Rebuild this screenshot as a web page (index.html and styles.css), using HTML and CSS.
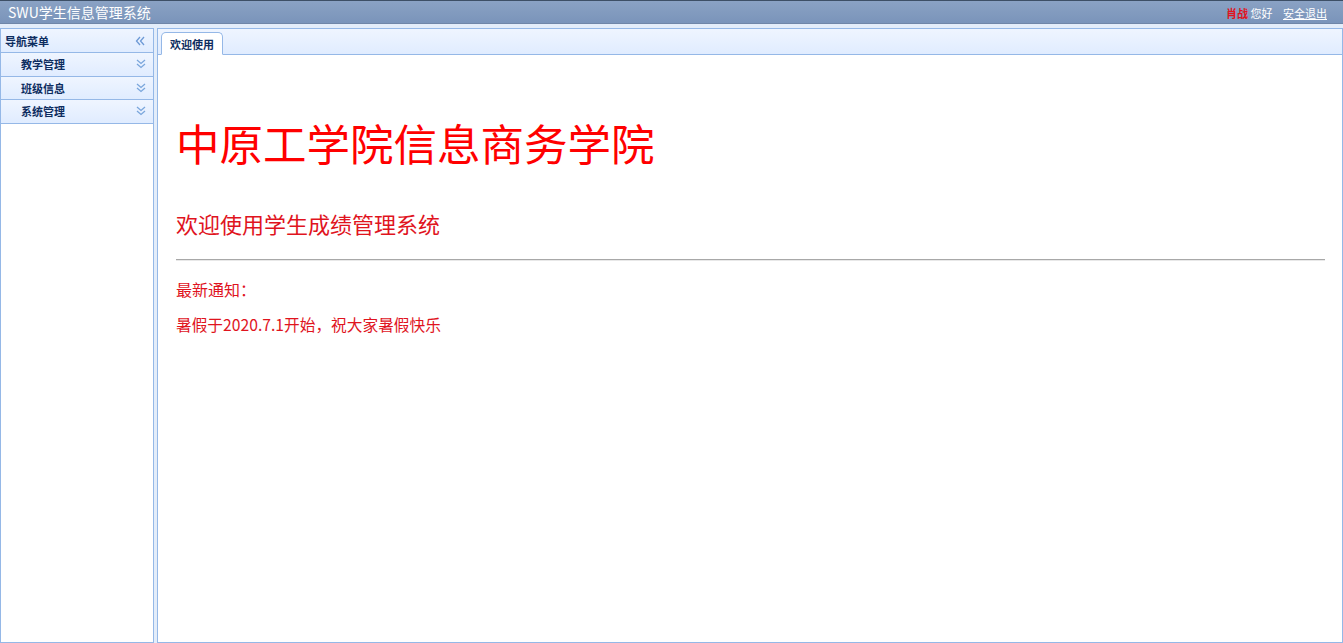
FILE: index.html
```html
<!DOCTYPE html>
<html lang="zh-CN">
<head>
<meta charset="utf-8">
<title>SWU学生信息管理系统</title>
<link rel="stylesheet" href="styles.css">
</head>
<body>
<div class="app">
  <header class="topbar">
    <div class="brand">SWU学生信息管理系统</div>
    <div class="user"><span class="uname">肖战</span> 您好 <a class="logout" href="#">安全退出</a></div>
  </header>
  <div class="main">
    <aside class="west">
      <div class="west-head">
        <span>导航菜单</span>
        <svg class="ico" width="10" height="10" viewBox="0 0 10 10"><polyline points="5,1 1.5,5 5,9" fill="none" stroke="#6d9ad6" stroke-width="1.3"/><polyline points="9,1 5.5,5 9,9" fill="none" stroke="#6d9ad6" stroke-width="1.3"/></svg>
      </div>
      <div class="acc-item"><span>教学管理</span><svg class="ico" width="10" height="10" viewBox="0 0 10 10"><polyline points="1,1 5,4.5 9,1" fill="none" stroke="#7aa6dc" stroke-width="1.3"/><polyline points="1,5 5,8.5 9,5" fill="none" stroke="#7aa6dc" stroke-width="1.3"/></svg></div>
      <div class="acc-item"><span>班级信息</span><svg class="ico" width="10" height="10" viewBox="0 0 10 10"><polyline points="1,1 5,4.5 9,1" fill="none" stroke="#7aa6dc" stroke-width="1.3"/><polyline points="1,5 5,8.5 9,5" fill="none" stroke="#7aa6dc" stroke-width="1.3"/></svg></div>
      <div class="acc-item"><span>系统管理</span><svg class="ico" width="10" height="10" viewBox="0 0 10 10"><polyline points="1,1 5,4.5 9,1" fill="none" stroke="#7aa6dc" stroke-width="1.3"/><polyline points="1,5 5,8.5 9,5" fill="none" stroke="#7aa6dc" stroke-width="1.3"/></svg></div>
    </aside>
    <section class="center">
      <div class="tabs">
        <div class="tab">欢迎使用</div>
      </div>
      <div class="content">
        <h1 class="title">中原工学院信息商务学院</h1>
        <h2 class="subtitle">欢迎使用学生成绩管理系统</h2>
        <hr class="rule">
        <p class="notice-label">最新通知：</p>
        <p class="notice">暑假于2020.7.1开始，祝大家暑假快乐</p>
      </div>
    </section>
  </div>
</div>
</body>
</html>
```
FILE: styles.css
```css
html, body {
  margin: 0;
  padding: 0;
  height: 100%;
}
body {
  font-family: "Noto Sans CJK SC", "Liberation Sans", sans-serif;
  background: #e3edfa;
  overflow: hidden;
}
.app {
  display: flex;
  flex-direction: column;
  height: 643px;
}
.topbar {
  height: 22px;
  border-top: 1px solid #3d4f66;
  background: linear-gradient(#8aa2c4, #7a94ba);
  display: flex;
  align-items: center;
  justify-content: space-between;
  padding: 0 16px 0 8px;
  border-bottom: 1px solid #6f86a8;
}
.brand {
  color: #fff;
  font-size: 14px;
  line-height: 22px;
}
.user {
  color: #fff;
  font-size: 11px;
  line-height: 22px;
  padding-top: 1px;
}
.uname {
  color: #e0141e;
  font-weight: bold;
}
.logout {
  color: #fff;
  text-decoration: underline;
  margin-left: 8px;
}
.main {
  flex: 1;
  display: flex;
  gap: 3px;
  padding-top: 4px;
  min-height: 0;
}
.west {
  width: 152px;
  border: 1px solid #95b8e7;
  background: #fff;
  box-sizing: content-box;
}
.west-head, .acc-item {
  display: flex;
  align-items: center;
  justify-content: space-between;
  font-size: 11px;
  font-weight: bold;
  color: #0e2d5f;
  background: linear-gradient(#eff5ff, #e0ecff);
  border-bottom: 1px solid #95b8e7;
}
.west-head {
  height: 23px;
  padding: 0 8px 0 4px;
}
.acc-item {
  height: 22.5px;
  padding: 0 7px 0 20px;
}
.ico {
  display: block;
}
.center {
  flex: 1;
  border: 1px solid #95b8e7;
  background: #fff;
  display: flex;
  flex-direction: column;
  min-width: 0;
}
.tabs {
  height: 25px;
  background: linear-gradient(#eff5ff, #e0ecff);
  border-bottom: 1px solid #95b8e7;
  display: flex;
  align-items: flex-end;
  padding-left: 3px;
}
.tab {
  width: 60px;
  height: 21px;
  margin-bottom: -1px;
  border: 1px solid #95b8e7;
  border-bottom: 1px solid #fff;
  border-radius: 5px 5px 0 0;
  background: #fff;
  font-size: 11px;
  font-weight: bold;
  color: #0e2d5f;
  display: flex;
  align-items: center;
  justify-content: center;
}
.content {
  flex: 1;
  padding: 0 17px 0 18px;
  color: #f00;
}
.title {
  margin: 61px 0 0;
  font-size: 43.5px;
  font-weight: normal;
  line-height: 53px;
}
.subtitle {
  margin: 39px 0 0;
  font-size: 22px;
  font-weight: normal;
  line-height: 30px;
  color: #e0141e;
}
.rule {
  margin: 21px 0 0;
  height: 0;
  border: 0;
  border-top: 1px solid #a8a8a8;
  border-bottom: 1px solid #e8e8e8;
}
.notice-label {
  margin: 16px 0 0;
  font-size: 16px;
  line-height: 24px;
  color: #e0141e;
}
.notice {
  margin: 12px 0 0;
  font-size: 15.7px;
  line-height: 24px;
  color: #e0141e;
}
```
